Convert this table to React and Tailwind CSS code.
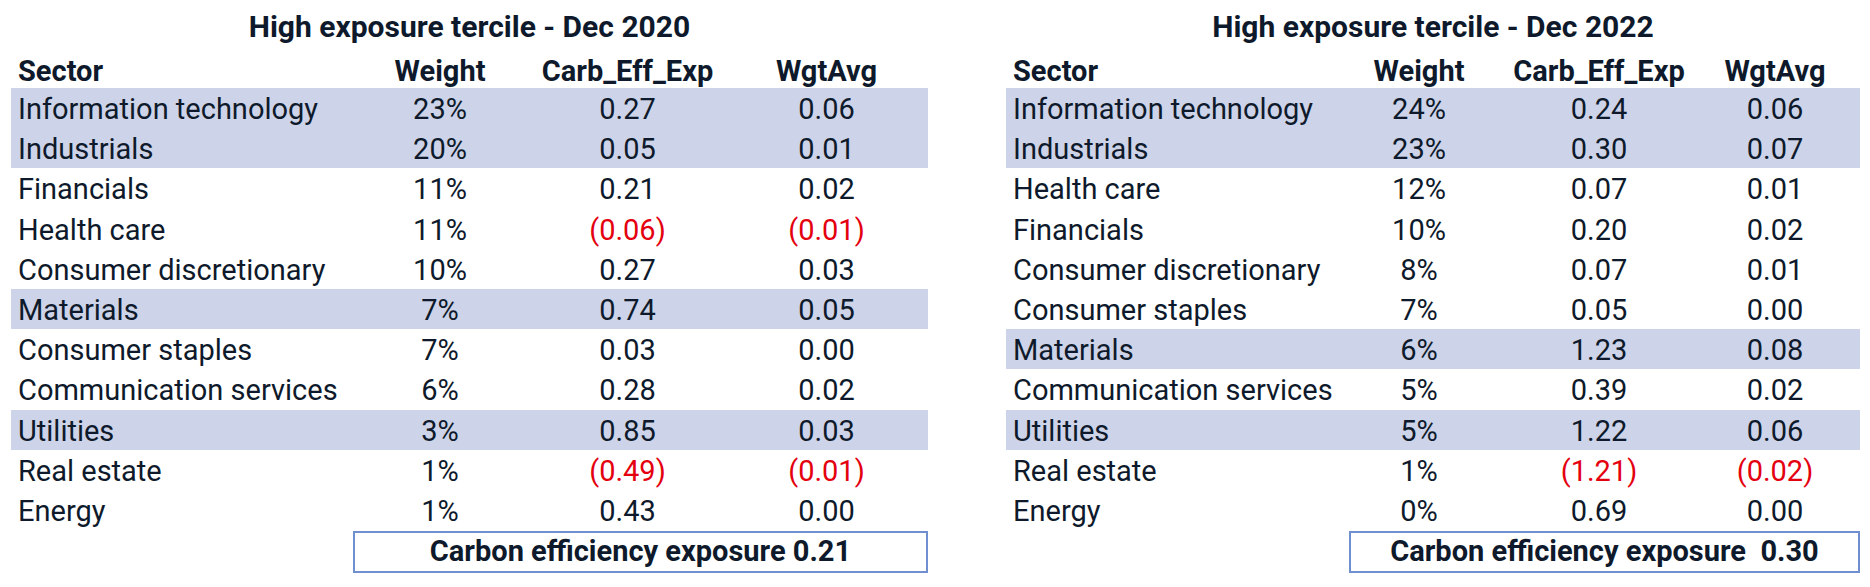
const left = {
  title: "High exposure tercile - Dec 2020",
  summary: "Carbon efficiency exposure 0.21",
  rows: [
    ["Information technology", "23%", "0.27", "0.06", true],
    ["Industrials", "20%", "0.05", "0.01", true],
    ["Financials", "11%", "0.21", "0.02"],
    ["Health care", "11%", "(0.06)", "(0.01)"],
    ["Consumer discretionary", "10%", "0.27", "0.03"],
    ["Materials", "7%", "0.74", "0.05", true],
    ["Consumer staples", "7%", "0.03", "0.00"],
    ["Communication services", "6%", "0.28", "0.02"],
    ["Utilities", "3%", "0.85", "0.03", true],
    ["Real estate", "1%", "(0.49)", "(0.01)"],
    ["Energy", "1%", "0.43", "0.00"],
  ],
};

const right = {
  title: "High exposure tercile - Dec 2022",
  summary: "Carbon efficiency exposure\u00a0 0.30",
  rows: [
    ["Information technology", "24%", "0.24", "0.06", true],
    ["Industrials", "23%", "0.30", "0.07", true],
    ["Health care", "12%", "0.07", "0.01"],
    ["Financials", "10%", "0.20", "0.02"],
    ["Consumer discretionary", "8%", "0.07", "0.01"],
    ["Consumer staples", "7%", "0.05", "0.00"],
    ["Materials", "6%", "1.23", "0.08", true],
    ["Communication services", "5%", "0.39", "0.02"],
    ["Utilities", "5%", "1.22", "0.06", true],
    ["Real estate", "1%", "(1.21)", "(0.02)"],
    ["Energy", "0%", "0.69", "0.00"],
  ],
};

function Num({ v }) {
  const neg = v.startsWith("(");
  return <div className={`text-center ${neg ? "text-[#e4000f]" : ""}`}>{v}</div>;
}

function Table({ data, cols, width, boxClass }) {
  return (
    <div className={`flex flex-col ${width}`}>
      <div className="mt-[7px] h-[40px] text-center text-[30px] leading-[40px] font-bold whitespace-nowrap">{data.title}</div>
      <div className={`grid ${cols} h-[41px] pt-[3px] items-center text-[29px] font-bold`}>
        <div className="pl-[7px]">Sector</div>
        <div className="text-center">Weight</div>
        <div className="text-center">Carb_Eff_Exp</div>
        <div className="text-center">WgtAvg</div>
      </div>
      {data.rows.map((r) => (
        <div
          key={r[0]}
          className={`grid ${cols} h-[40.2px] items-center text-[29px] ${r[4] ? "bg-[#cdd3e8]" : ""}`}
        >
          <div className="pl-[7px] whitespace-nowrap">{r[0]}</div>
          <Num v={r[1]} />
          <Num v={r[2]} />
          <Num v={r[3]} />
        </div>
      ))}
      <div
        className={`mt-[1px] h-[42px] border-2 border-[#6f8fd0] flex items-center justify-center text-[29px] font-bold whitespace-pre ${boxClass}`}
      >
        {data.summary}
      </div>
    </div>
  );
}

export default function App() {
  return (
    <div className="w-[1870px] h-[587px] bg-white text-[#0e1a2b] font-['Roboto',sans-serif] flex pl-[11px] gap-[78px]">
      <Table
        data={left}
        width="w-[917px]"
        cols="grid-cols-[339px_180px_195px_203px]"
        boxClass="ml-[342px]"
      />
      <Table
        data={right}
        width="w-[854px]"
        cols="grid-cols-[324px_178px_182px_170px]"
        boxClass="ml-[343px]"
      />
    </div>
  );
}
